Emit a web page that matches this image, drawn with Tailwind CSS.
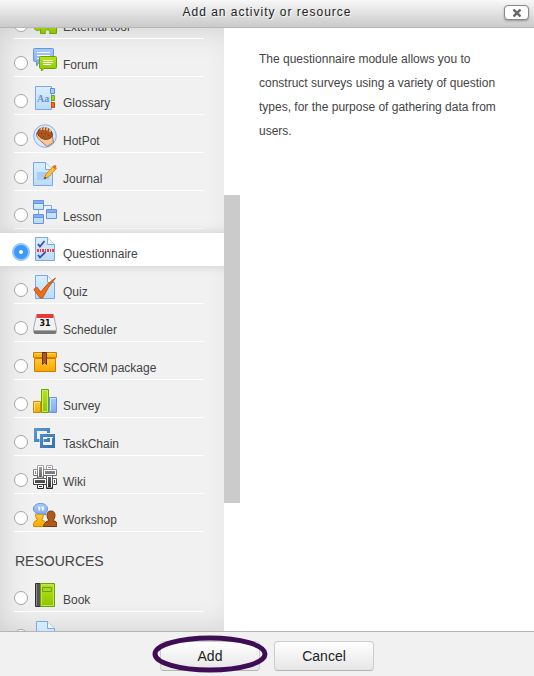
<!DOCTYPE html>
<html lang="en">
<head>
    <meta charset="UTF-8">
    <meta name="viewport" content="width=device-width, initial-scale=1.0">
    <title>Add an activity or resource</title>
    <script src="https://cdn.jsdelivr.net/npm/@tailwindcss/browser@4"></script>
</head>
<body class="bg-white font-['Liberation_Sans',Arial,sans-serif] text-[12px] text-[#444]">

    <!-- Shared gradients -->
    <svg class="absolute h-0 w-0" aria-hidden="true">
        <defs>
            <linearGradient id="page" x1="0" y1="0" x2="0" y2="1"><stop offset="0" stop-color="#d9efff"/><stop offset="1" stop-color="#b9dcf5"/></linearGradient>
            <linearGradient id="green" x1="0" y1="0" x2="0" y2="1"><stop offset="0" stop-color="#b5e61d"/><stop offset="1" stop-color="#8fc400"/></linearGradient>
            <linearGradient id="blue" x1="0" y1="0" x2="0" y2="1"><stop offset="0" stop-color="#a9caff"/><stop offset="1" stop-color="#7fa9ee"/></linearGradient>
            <linearGradient id="gold" x1="0" y1="0" x2="0" y2="1"><stop offset="0" stop-color="#ffc933"/><stop offset="1" stop-color="#f7a800"/></linearGradient>
            <linearGradient id="steel" gradientUnits="userSpaceOnUse" x1="0" y1="0" x2="0" y2="24"><stop offset="0" stop-color="#aaa"/><stop offset="1" stop-color="#222"/></linearGradient>
            <linearGradient id="chain" gradientUnits="userSpaceOnUse" x1="0" y1="0" x2="24" y2="24"><stop offset="0" stop-color="#5b9bd5"/><stop offset="1" stop-color="#2f6ba8"/></linearGradient>
        </defs>
    </svg>

    <div class="flex h-screen flex-col">
        <!-- Title bar -->
        <header class="relative flex h-7 shrink-0 items-center justify-center border-b border-[#b5b5b5] bg-linear-to-b from-[#f8f8f8] to-[#cacaca] pb-1">
            <h1 class="tracking-[1px] text-[#222] text-shadow-[1px_1px_1px_#fff]">Add an activity or resource</h1>
            <button type="button" aria-label="Close" class="absolute top-[5px] right-[5px] flex h-[15px] w-[25px] items-center justify-center rounded border border-[#888] bg-white shadow-[0_1px_2px_rgba(0,0,0,0.3)]">
                <svg class="h-2 w-2" viewBox="0 0 8 8" stroke="#666" stroke-width="2.4"><path d="M0.5 0.5l7 7M7.5 0.5l-7 7"/></svg>
            </button>
        </header>

        <main class="flex min-h-0 flex-1">
            <!-- Activity list -->
            <div class="w-60 shrink-0 overflow-hidden bg-[#f1f1f1] shadow-[inset_0_0_30px_0_#ccc]">
                <ul class="-mt-[27px]">
                    <li class="mr-9 ml-3.5 h-[38px] border-b border-white pb-1">
                        <label class="flex h-full items-end gap-[5px]">
                            <input type="radio" name="module" class="mb-0.5 h-3.5 w-3.5 appearance-none rounded-full border border-[#a5a5a5] bg-white">
                            <svg class="h-6 w-6" viewBox="0 0 24 24"><path d="M1.500 11.500h7c-2-4 5-4 3 0h10v5h2v7h-7c2-5-6-5-4 0h-5v-4c-3 2-6 1-6-2z" fill="url(#green)" stroke="#6fa00c"/></svg>
                            <span class="pl-px leading-[14px]">External tool</span>
                        </label>
                    </li>
                    <li class="mr-9 ml-3.5 h-[38px] border-b border-white pb-1">
                        <label class="flex h-full items-end gap-[5px]">
                            <input type="radio" name="module" class="mb-0.5 h-3.5 w-3.5 appearance-none rounded-full border border-[#a5a5a5] bg-white">
                            <svg class="h-6 w-6" viewBox="0 0 24 24">
                                <path d="M1.500.5h18q1 0 1 1v11q0 1-1 1H6.500L3.500 18v-4.500h-2q-1 0-1-1v-11q0-1 1-1z" fill="url(#blue)" stroke="#6494e4"/>
                                <path d="M4 4.500h13M4 7.500h13M4 10.500h3" stroke="#fff"/>
                                <path d="M7.500 8.500h15q1 0 1 1v10q0 1-1 1H11L8.500 23v-2.500h-1q-1 0-1-1v-10q0-1 1-1z" fill="url(#green)" stroke="#6fa00c"/>
                                <path d="M10 12.500h10M10 14.500h10M10 16.500h8" stroke="#fff"/>
                            </svg>
                            <span class="pl-px leading-[14px]">Forum</span>
                        </label>
                    </li>
                    <li class="mr-9 ml-3.5 h-[38px] border-b border-white pb-1">
                        <label class="flex h-full items-end gap-[5px]">
                            <input type="radio" name="module" class="mb-0.5 h-3.5 w-3.5 appearance-none rounded-full border border-[#a5a5a5] bg-white">
                            <svg class="h-6 w-6" viewBox="0 0 24 24">
                                <path d="M2.500.5h16v23h-16z" fill="url(#page)" stroke="#7aa7f0"/>
                                <path d="M17.500 2.500h4v5h-4z" fill="#a9caff" stroke="#5b8fe8"/>
                                <path d="M18.500 9.500h3v5h-3z" fill="#a4d91a" stroke="#6fa00c"/>
                                <path d="M18.500 16.500h3v5h-3z" fill="#f26a1b" stroke="#cf4a00"/>
                                <text x="4" y="16" font-family="Liberation Serif, serif" font-size="10" font-weight="bold" fill="#6b8fd0">Aa</text>
                            </svg>
                            <span class="pl-px leading-[14px]">Glossary</span>
                        </label>
                    </li>
                    <li class="mr-9 ml-3.5 h-[38px] border-b border-white pb-1">
                        <label class="flex h-full items-end gap-[5px]">
                            <input type="radio" name="module" class="mb-0.5 h-3.5 w-3.5 appearance-none rounded-full border border-[#a5a5a5] bg-white">
                            <svg class="h-6 w-6" viewBox="0 0 24 24">
                                <circle cx="12" cy="12" r="11.300" fill="#d6eaff" stroke="#86b0ee"/>
                                <path d="M3.500 9C3 14 7 16 10 19l4 3.500 6.500-4L19 10z" fill="#f7c79e" stroke="#9a5a30" stroke-width=".8"/>
                                <ellipse cx="12" cy="9.500" rx="7.500" ry="5.800" transform="rotate(15 12 9.500)" fill="#a9561c" stroke="#7a3408" stroke-width=".8"/>
                                <path d="M8 5.500l.8-2M11 5.500l.6-2.500M14 6l.3-2.500M17 7.500l.2-2" stroke="#f3c7a2" stroke-width="1.500" stroke-linecap="round"/>
                                <path d="M8 9l1 1m3-1l1 1m-3 2l1 1m4-2l1 1" stroke="#7a3408" stroke-width=".8"/>
                            </svg>
                            <span class="pl-px leading-[14px]">HotPot</span>
                        </label>
                    </li>
                    <li class="mr-9 ml-3.5 h-[38px] border-b border-white pb-1">
                        <label class="flex h-full items-end gap-[5px]">
                            <input type="radio" name="module" class="mb-0.5 h-3.5 w-3.5 appearance-none rounded-full border border-[#a5a5a5] bg-white">
                            <svg class="h-6 w-6" viewBox="0 0 24 24">
                                <path d="M.5.5h12l7 7v16H.5z" fill="url(#page)" stroke="#7aa7f0"/>
                                <path d="M4 10h12v8H4z" fill="#a9cdf5"/>
                                <path d="M12.500.5v7h7" fill="#eef8ff" stroke="#7aa7f0"/>
                                <path d="M11 17l2-5 7.500-8 3 2.500-7.500 8z" fill="#fbbf3a" stroke="#c07a10" stroke-width=".8"/>
                                <path d="M19.500 5l2-2q2-.5 2 2l-1.500 2.500z" fill="#ee6b1f"/>
                                <path d="M11 17l1-2.200 1.400 1.200z" fill="#333"/>
                            </svg>
                            <span class="pl-px leading-[14px]">Journal</span>
                        </label>
                    </li>
                    <li class="mr-9 ml-3.5 h-[38px] border-b border-white pb-1">
                        <label class="flex h-full items-end gap-[5px]">
                            <input type="radio" name="module" class="mb-0.5 h-3.5 w-3.5 appearance-none rounded-full border border-[#a5a5a5] bg-white">
                            <svg class="h-6 w-6" viewBox="0 0 24 24">
                                <path d="M5.500 9v6M10 5.500h8.500V10" fill="none" stroke="#7aa7f0"/>
                                <path d="M.5.5h10v9H.5zM.5 14.500h10v9H.5zM13.500 9.500h10v9h-10z" fill="url(#page)" stroke="#6494e4"/>
                                <path d="M1 2h9M1 16h9M14 11h9" stroke="#86b0f5" stroke-width="2"/>
                                <path d="M1 3.500h9M1 17.500h9M14 12.500h9" stroke="#6494e4"/>
                            </svg>
                            <span class="pl-px leading-[14px]">Lesson</span>
                        </label>
                    </li>
                    <!-- Selected module -->
                    <li class="mt-1 h-[33px] bg-white pr-9 pb-[5px] pl-3.5 shadow-[0_0_10px_0_#ccc]">
                        <label class="flex h-full items-end gap-[5px]">
                            <input type="radio" name="module" checked class="mb-0.5 h-3.5 w-3.5 appearance-none rounded-full border-5 border-[#3b99fc] bg-white ring-2 ring-[#92c5fb]">
                            <svg class="h-6 w-6" viewBox="0 0 24 24">
                                <path d="M2.500.5h12l7 7v16h-19z" fill="url(#page)" stroke="#7aa7f0"/>
                                <path d="M14.500.5v7h7" fill="#eef8ff" stroke="#7aa7f0"/>
                                <path d="M5 7l2 2.500L11.500 4M5 18l2 2.500L12.500 15" fill="none" stroke="#4a48b8" stroke-width="1.800"/>
                                <path d="M4 13.500h17" stroke="#f13b3b" stroke-width="3" stroke-dasharray="2 1 1 1"/>
                            </svg>
                            <span class="pl-px leading-[14px]">Questionnaire</span>
                        </label>
                    </li>
                    <li class="mr-9 ml-3.5 h-[38px] border-b border-white pb-1">
                        <label class="flex h-full items-end gap-[5px]">
                            <input type="radio" name="module" class="mb-0.5 h-3.5 w-3.5 appearance-none rounded-full border border-[#a5a5a5] bg-white">
                            <svg class="h-6 w-6" viewBox="0 0 24 24">
                                <path d="M2.500.5h12l7 7v16h-19z" fill="url(#page)" stroke="#7aa7f0"/>
                                <path d="M14.500.5v7h7" fill="#eef8ff" stroke="#7aa7f0"/>
                                <path d="M.8 14.500l3-2.500 4 5Q14 8 22.500 3 15 12 9.500 23H7z" fill="#ee6d16" stroke="#b84a05" stroke-width=".8"/>
                            </svg>
                            <span class="pl-px leading-[14px]">Quiz</span>
                        </label>
                    </li>
                    <li class="mr-9 ml-3.5 h-[38px] border-b border-white pb-1">
                        <label class="flex h-full items-end gap-[5px]">
                            <input type="radio" name="module" class="mb-0.5 h-3.5 w-3.5 appearance-none rounded-full border border-[#a5a5a5] bg-white">
                            <svg class="h-6 w-6" viewBox="0 0 24 24">
                                <path d="M.5 16h23v3q0 2-2 2h-19q-2 0-2-2z" fill="#777"/>
                                <path d="M3.500 1.500h17l3 14.500q0 1.500-1.500 1.500H2Q.5 17.500.5 16z" fill="#f2f2f2" stroke="#aaa"/>
                                <path d="M4 1h16l.7 4H3.300z" fill="#e8393b"/>
                                <text x="12" y="13" text-anchor="middle" font-family="DejaVu Sans, sans-serif" font-size="8" font-weight="bold" fill="#111">31</text>
                            </svg>
                            <span class="pl-px leading-[14px]">Scheduler</span>
                        </label>
                    </li>
                    <li class="mr-9 ml-3.5 h-[38px] border-b border-white pb-1">
                        <label class="flex h-full items-end gap-[5px]">
                            <input type="radio" name="module" class="mb-0.5 h-3.5 w-3.5 appearance-none rounded-full border border-[#a5a5a5] bg-white">
                            <svg class="h-6 w-6" viewBox="0 0 24 24">
                                <path d="M1.500 7.500h21v13h-21z" fill="url(#gold)" stroke="#cf7a00"/>
                                <path d="M.5 1.500h23v5H.5z" fill="#ffb70f" stroke="#cf7a00"/>
                                <path d="M1.500 2.500h21" stroke="#ffdf7a"/>
                                <path d="M9.500 1.500h4v12l-2-2-2 2z" fill="#a85a22" stroke="#6f3208"/>
                            </svg>
                            <span class="pl-px leading-[14px]">SCORM package</span>
                        </label>
                    </li>
                    <li class="mr-9 ml-3.5 h-[38px] border-b border-white pb-1">
                        <label class="flex h-full items-end gap-[5px]">
                            <input type="radio" name="module" class="mb-0.5 h-3.5 w-3.5 appearance-none rounded-full border border-[#a5a5a5] bg-white">
                            <svg class="h-6 w-6" viewBox="0 0 24 24">
                                <path d="M.5 12.500h7v11h-7z" fill="url(#gold)" stroke="#d98500"/>
                                <path d="M1.500 22v-8.500H7" fill="none" stroke="#ffe08a"/>
                                <path d="M16.500 8.500h7v15h-7z" fill="url(#blue)" stroke="#6494e4"/>
                                <path d="M17.500 22V9.500H23" fill="none" stroke="#cfe2ff"/>
                                <path d="M8.500.5h7v23h-7z" fill="url(#green)" stroke="#6fa00c"/>
                                <path d="M9.500 22.500v-21h5v21z" fill="none" stroke="#c8ee5a"/>
                            </svg>
                            <span class="pl-px leading-[14px]">Survey</span>
                        </label>
                    </li>
                    <li class="mr-9 ml-3.5 h-[38px] border-b border-white pb-1">
                        <label class="flex h-full items-end gap-[5px]">
                            <input type="radio" name="module" class="mb-0.5 h-3.5 w-3.5 appearance-none rounded-full border border-[#a5a5a5] bg-white">
                            <svg class="h-6 w-6" viewBox="0 0 24 24" fill="none" stroke="url(#chain)" stroke-width="3">
                                <path d="M8.500 8.500h12v11h-12z"/>
                                <path d="M12 14.500h3.500V5" stroke="#f1f1f1" stroke-width="5"/>
                                <path d="M6.500 13.500h-4v-11h13v4M15.500 8v5.500h-5"/>
                                <path d="M13 8.500h7" stroke="#f1f1f1" stroke-width="5"/>
                                <path d="M12 8.500h10"/>
                            </svg>
                            <span class="pl-px leading-[14px]">TaskChain</span>
                        </label>
                    </li>
                    <li class="mr-9 ml-3.5 h-[38px] border-b border-white pb-1">
                        <label class="flex h-full items-end gap-[5px]">
                            <input type="radio" name="module" class="mb-0.5 h-3.5 w-3.5 appearance-none rounded-full border border-[#a5a5a5] bg-white">
                            <svg class="h-6 w-6" viewBox="0 0 24 24">
                                <g fill="#fff" stroke="url(#steel)">
                                    <path d="M4.500.5h6v23h-6zM13.500.5h6v23h-6z"/>
                                    <path d="M.5 4.500h23v6H.5zM.5 13.500h23v6H.5z"/>
                                    <path d="M4.500 1v11h6V1M13.500 12v11h6V12"/>
                                </g>
                                <g fill="url(#steel)">
                                    <path d="M6 2h3v10H6zM15 12h3v10h-3zM6 21h3v1H6zM15 2h3v1h-3z"/>
                                    <path d="M12 6h10v3H12zM2 6h1v3H2zM2 15h10v3H2zM21 15h1v3h-1z"/>
                                </g>
                            </svg>
                            <span class="pl-px leading-[14px]">Wiki</span>
                        </label>
                    </li>
                    <li class="mr-9 ml-3.5 h-[38px] border-b border-white pb-1">
                        <label class="flex h-full items-end gap-[5px]">
                            <input type="radio" name="module" class="mb-0.5 h-3.5 w-3.5 appearance-none rounded-full border border-[#a5a5a5] bg-white">
                            <svg class="h-6 w-6" viewBox="0 0 24 24">
                                <path d="M.5 23.500v-3q0-2 4-3.500-2-2-2-6h8q0 4-2 6 4 1 5 3.500v3z" fill="url(#gold)" stroke="#d98500"/>
                                <path d="M10.500 23.500l1-3q1-2 4.500-3-2-2-2-5 0-4.500 4-4.500t4 4.500q0 3-2 5 4 1 4 3v3z" fill="#ad5a1b" stroke="#7d3a08"/>
                                <path d="M7.500.5c4 0 7 2 7 5.500 0 2-1 3.500-2 4l.5 2-3-1.200C5 11.500.5 10 .5 6 .5 2.500 3.500.5 7.500.5z" fill="url(#blue)" stroke="#6494e4"/>
                                <path d="M5 4h2v2.500l-1 1.500M8.500 4h2v2.500l-1 1.500" fill="#fff" stroke="#fff" stroke-width=".6"/>
                            </svg>
                            <span class="pl-px leading-[14px]">Workshop</span>
                        </label>
                    </li>
                </ul>

                <h2 class="h-[42px] px-[15px] pt-5 text-[14px] leading-[18px]">RESOURCES</h2>

                <ul>
                    <li class="mr-9 ml-3.5 h-[38px] border-b border-white pb-1">
                        <label class="flex h-full items-end gap-[5px]">
                            <input type="radio" name="module" class="mb-0.5 h-3.5 w-3.5 appearance-none rounded-full border border-[#a5a5a5] bg-white">
                            <svg class="h-6 w-6" viewBox="0 0 24 24">
                                <path d="M2.500.5h5v23h-5z" fill="#555" stroke="#333"/>
                                <path d="M3.500 1v22" stroke="#888"/>
                                <path d="M7.500.5h14v23h-14z" fill="url(#green)" stroke="#6fa00c"/>
                                <path d="M8.500 1.500h12v21h-12z" fill="none" stroke="#c0e840"/>
                                <path d="M9.500 4.500h9v4h-9z" fill="#a8dc18" stroke="#6fa00c"/>
                            </svg>
                            <span class="pl-px leading-[14px]">Book</span>
                        </label>
                    </li>
                    <li class="mr-9 ml-3.5 h-[38px] pb-[5px]">
                        <label class="flex h-full items-end gap-[5px]">
                            <input type="radio" name="module" aria-label="File" class="mb-0.5 h-3.5 w-3.5 appearance-none rounded-full border border-[#a5a5a5] bg-white">
                            <svg class="h-6 w-6" viewBox="0 0 24 24">
                                <path d="M3.500.5h11l7 7v16h-18z" fill="url(#page)" stroke="#7aa7f0"/>
                                <path d="M14.500.5v7h7" fill="#eef8ff" stroke="#7aa7f0"/>
                            </svg>
                        </label>
                    </li>
                </ul>
            </div>

            <!-- Scrollbar, lies over the right end of the list -->
            <div class="relative -ml-4 w-4 shrink-0 bg-white pt-[167px]">
                <div class="h-[308px] bg-[#cbcbcb]"></div>
            </div>

            <!-- Help text -->
            <div class="flex-1 px-[19px] py-[19px]">
                <p class="max-w-[250px] leading-6">The questionnaire module allows you to construct surveys using a variety of question types, for the purpose of gathering data from users.</p>
            </div>
        </main>

        <!-- Buttons -->
        <footer class="flex h-[45px] shrink-0 items-center justify-center gap-3.5 border-t border-[#b5b5b5] bg-[#f1f1f1] pt-1">
            <div class="relative">
                <button type="button" class="h-[30px] w-[100px] rounded border border-[#ccc] border-b-[#b3b3b3] bg-linear-to-b from-white to-[#e6e6e6] text-[14px] text-[#222]">Add</button>
                <svg class="pointer-events-none absolute -top-[6px] -left-2 h-[40px] w-[116px]" viewBox="0 0 116 40" fill="none" stroke="#3f0d54" stroke-width="5"><ellipse cx="58" cy="19" rx="55" ry="16"/></svg>
            </div>
            <button type="button" class="h-[30px] w-[100px] rounded border border-[#ccc] border-b-[#b3b3b3] bg-linear-to-b from-white to-[#e6e6e6] text-[14px] text-[#222]">Cancel</button>
        </footer>
    </div>

</body>
</html>
